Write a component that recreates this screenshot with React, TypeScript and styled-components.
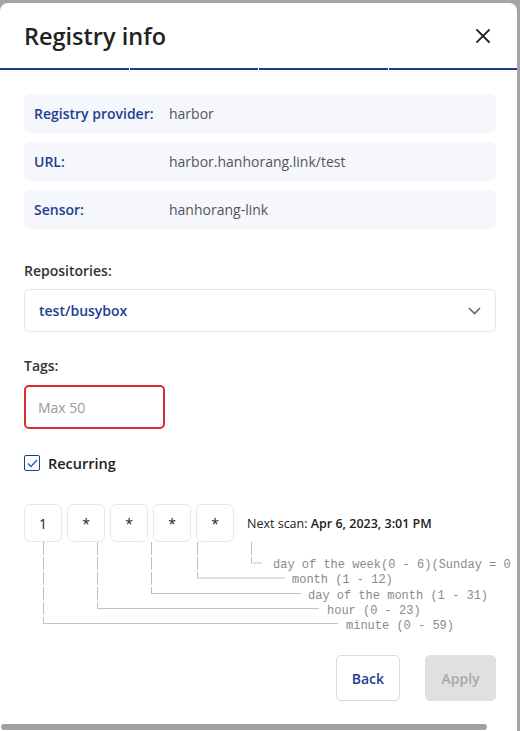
import React from "react";
import styled, { createGlobalStyle } from "styled-components";

const Global = createGlobalStyle`
  html, body { margin: 0; padding: 0; background: #a4a4a4; overflow: hidden; }
  body { font-family: "Open Sans", "Noto Sans", sans-serif; }
  * { box-sizing: border-box; }
`;

const Modal = styled.div`
  position: relative;
  margin-top: 3px;
  width: 517px;
  height: 728px;
  background: #ffffff;
  border-radius: 8px 8px 0 0;
  overflow: hidden;
`;

const Header = styled.div`
  height: 65px;
  padding: 0 26px 0 24px;
  display: flex;
  align-items: center;
  justify-content: space-between;
`;

const Title = styled.h1`
  margin: 0;
  font-size: 23.5px;
  font-weight: 600;
  color: #222;
  letter-spacing: 0;
`;

const CloseButton = styled.button`
  border: 0;
  background: none;
  padding: 0;
  width: 16px;
  height: 16px;
  display: flex;
  align-items: center;
  justify-content: center;
  cursor: pointer;
`;

const Progress = styled.div`
  display: grid;
  grid-template-columns: repeat(4, 1fr);
  gap: 1px;
  height: 2px;
`;

const Segment = styled.div`
  background: #1b3d8e;
`;

const Body = styled.div`
  padding: 24px 21px 0 24px;
  display: flex;
  flex-direction: column;
`;

const InfoList = styled.div`
  display: flex;
  flex-direction: column;
  gap: 9px;
`;

const InfoRow = styled.div`
  height: 39px;
  border-radius: 6px;
  background: #f5f7fc;
  padding: 0 10px;
  display: grid;
  grid-template-columns: 135px 1fr;
  align-items: center;
  font-size: 14px;
`;

const InfoLabel = styled.span`
  font-weight: 600;
  color: #1d3f8f;
`;

const InfoValue = styled.span`
  color: #555;
`;

const FieldLabel = styled.div<{ $mt: number }>`
  margin-top: ${(p) => p.$mt}px;
  font-size: 14px;
  font-weight: 600;
  color: #333;
  line-height: 20px;
`;

const Select = styled.div`
  margin-top: 8px;
  height: 43px;
  border: 1px solid #e4e7ee;
  border-radius: 6px;
  padding: 0 14px;
  display: flex;
  align-items: center;
  justify-content: space-between;
`;

const SelectValue = styled.span`
  font-size: 14px;
  font-weight: 600;
  color: #1d3f8f;
`;

const TagInput = styled.input`
  margin-top: 9px;
  width: 141px;
  height: 44px;
  border: 2px solid #dd2a2a;
  border-radius: 5px;
  padding: 0 12px;
  font-family: inherit;
  font-size: 14px;
  color: #333;
  outline: none;
  &::placeholder { color: #9a9a9a; }
`;

const CheckRow = styled.label`
  margin-top: 26px;
  display: flex;
  align-items: center;
  gap: 8px;
  font-size: 14.5px;
  font-weight: 600;
  color: #222;
  height: 16px;
`;

const CheckBox = styled.span`
  width: 16px;
  height: 16px;
  border: 1.5px solid #1d3f8f;
  border-radius: 2px;
  display: flex;
  align-items: center;
  justify-content: center;
`;

const CronRow = styled.div`
  margin-top: 33px;
  display: flex;
  align-items: center;
  gap: 5px;
`;

const CronCell = styled.div`
  width: 38px;
  height: 38px;
  border: 1px solid #e6e8f0;
  border-radius: 6px;
  display: flex;
  align-items: center;
  justify-content: center;
  font-size: 14px;
  color: #222;
`;

const NextScan = styled.div`
  margin-left: 8px;
  font-size: 12.5px;
  color: #222;
  b { font-weight: 600; }
`;

const Diagram = styled.svg`
  display: block;
  overflow: visible;
  font-family: "Liberation Mono", monospace;
`;

const Actions = styled.div`
  margin-top: 21px;
  display: flex;
  justify-content: flex-end;
  gap: 25px;
`;

const Button = styled.button<{ $primary?: boolean }>`
  height: 46px;
  padding: 0 15px;
  border-radius: 5px;
  font-family: inherit;
  font-size: 14px;
  font-weight: 600;
  border: 1px solid ${(p) => (p.$primary ? "#e0e0e0" : "#dcdcdc")};
  background: ${(p) => (p.$primary ? "#e0e0e0" : "#ffffff")};
  color: ${(p) => (p.$primary ? "#a9a9a9" : "#1d3f8f")};
  min-width: ${(p) => (p.$primary ? 71 : 63)}px;
`;

const ScrollThumb = styled.div`
  position: absolute;
  left: 1px;
  bottom: 1px;
  width: 486px;
  height: 6px;
  border-radius: 3px;
  background: #a1a1a1;
`;

const info = [
  ["Registry provider:", "harbor"],
  ["URL:", "harbor.hanhorang.link/test"],
  ["Sensor:", "hanhorang-link"],
];

const cron = ["1", "*", "*", "*", "*"];

const branches = [
  { x: 227, y: 20.5, hx: 238, tx: 249, label: "day of the week(0 - 6)(Sunday = 0 or 7)" },
  { x: 173, y: 35.5, hx: 261, tx: 268, label: "month (1 - 12)" },
  { x: 127, y: 51, hx: 277, tx: 284, label: "day of the month (1 - 31)" },
  { x: 73, y: 66, hx: 295, tx: 303, label: "hour (0 - 23)" },
  { x: 19, y: 81, hx: 314, tx: 322, label: "minute (0 - 59)" },
];

export default function App() {
  return (
    <>
      <Global />
      <Modal>
        <Header>
          <Title>Registry info</Title>
          <CloseButton aria-label="close">
            <svg width="14" height="14" viewBox="0 0 14 14">
              <path d="M1 1L13 13M13 1L1 13" stroke="#222" strokeWidth="1.8" strokeLinecap="square" />
            </svg>
          </CloseButton>
        </Header>
        <Progress>
          <Segment />
          <Segment />
          <Segment />
          <Segment />
        </Progress>
        <Body>
          <InfoList>
            {info.map(([l, v]) => (
              <InfoRow key={l}>
                <InfoLabel>{l}</InfoLabel>
                <InfoValue>{v}</InfoValue>
              </InfoRow>
            ))}
          </InfoList>
          <FieldLabel $mt={32}>Repositories:</FieldLabel>
          <Select>
            <SelectValue>test/busybox</SelectValue>
            <svg width="13" height="8" viewBox="0 0 13 8">
              <path d="M1 1L6.5 6.5L12 1" fill="none" stroke="#666" strokeWidth="1.6" />
            </svg>
          </Select>
          <FieldLabel $mt={24}>Tags:</FieldLabel>
          <TagInput placeholder="Max 50" />
          <CheckRow>
            <CheckBox>
              <svg width="11" height="9" viewBox="0 0 11 9">
                <path d="M1 4.5L4 7.5L10 1" fill="none" stroke="#2a57c9" strokeWidth="1.4" />
              </svg>
            </CheckBox>
            Recurring
          </CheckRow>
          <CronRow>
            {cron.map((c, i) => (
              <CronCell key={i}>{c}</CronCell>
            ))}
            <NextScan>
              Next scan: <b>Apr 6, 2023, 3:01 PM</b>
            </NextScan>
          </CronRow>
          <Diagram width="472" height="92" viewBox="0 0 472 92">
            {branches.map((b) => (
              <g key={b.label}>
                <line x1={b.x + 0.5} y1={0} x2={b.x + 0.5} y2={b.y} stroke="#bdbdbd" strokeWidth="1" strokeDasharray="12.5 2.5" />
                <line x1={b.x} y1={b.y + 0.5} x2={b.hx} y2={b.y + 0.5} stroke="#c4c4c4" strokeWidth="1" />
                <text x={b.tx} y={b.y + 5.5} fontSize="12" fill="#8a8a8a">
                  {b.label}
                </text>
              </g>
            ))}
          </Diagram>
          <Actions>
            <Button>Back</Button>
            <Button $primary>Apply</Button>
          </Actions>
        </Body>
        <ScrollThumb />
      </Modal>
    </>
  );
}
